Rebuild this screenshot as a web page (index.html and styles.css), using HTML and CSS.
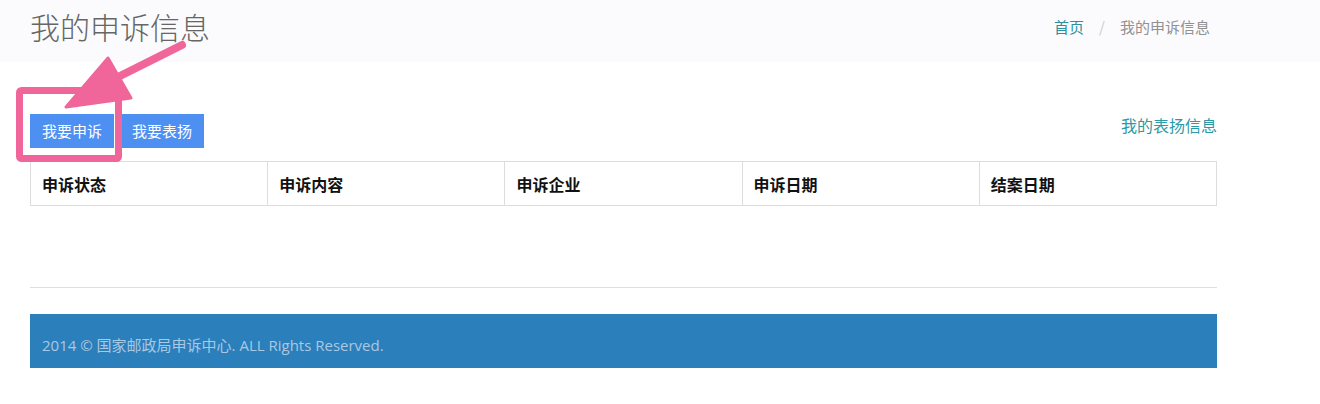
FILE: index.html
```html
<!DOCTYPE html>
<html lang="zh-CN">
<head>
<meta charset="utf-8">
<title>我的申诉信息</title>
<link rel="stylesheet" href="styles.css">
</head>
<body>
<header class="page-head">
  <div class="container head-inner">
    <h1 class="page-title">我的申诉信息</h1>
    <ol class="breadcrumb">
      <li><a href="#" class="crumb-link">首页</a></li>
      <li class="crumb-sep">/</li>
      <li class="crumb-active">我的申诉信息</li>
    </ol>
  </div>
</header>

<main class="container content">
  <div class="toolbar">
    <div class="btn-group">
      <a href="#" class="btn">我要申诉</a>
      <a href="#" class="btn">我要表扬</a>
    </div>
    <a href="#" class="side-link">我的表扬信息</a>
  </div>

  <table class="grid">
    <thead>
      <tr>
        <th>申诉状态</th>
        <th>申诉内容</th>
        <th>申诉企业</th>
        <th>申诉日期</th>
        <th>结案日期</th>
      </tr>
    </thead>
  </table>

  <hr class="divider">

  <footer class="footer">
    2014 © 国家邮政局申诉中心. ALL Rights Reserved.
  </footer>
</main>

<svg class="annotation" width="200" height="170" viewBox="0 0 200 170" aria-hidden="true">
  <rect x="19.5" y="90.5" width="99" height="68" rx="2" fill="none" stroke="#f0669a" stroke-width="7"/>
  <line x1="182" y1="45" x2="104" y2="84" stroke="#f0669a" stroke-width="8" stroke-linecap="round"/>
  <polygon points="108,58 131,98 66,107" fill="#f0669a" stroke="#f0669a" stroke-width="3" stroke-linejoin="round"/>
</svg>
</body>
</html>
```

FILE: styles.css
```css
html, body {
  margin: 0;
  padding: 0;
  background: #ffffff;
}

body {
  font-family: "Open Sans", "Noto Sans CJK SC", sans-serif;
  color: #333;
  position: relative;
  width: 1320px;
  height: 404px;
  overflow: hidden;
}

.container {
  width: 1187px;
  margin-left: 30px;
}

.page-head {
  background: #fbfbfd;
  height: 62px;
}

.head-inner {
  display: flex;
  justify-content: space-between;
  align-items: flex-start;
}

.page-title {
  margin: 0;
  padding-top: 9px;
  font-family: "Noto Sans CJK SC", sans-serif;
  font-weight: 300;
  font-size: 30px;
  line-height: 34px;
  color: #666666;
}

.breadcrumb {
  list-style: none;
  margin: 0;
  padding: 17px 7px 0 0;
  display: flex;
  gap: 15px;
  font-family: "Noto Sans CJK SC", sans-serif;
  font-size: 15px;
  line-height: 20px;
}

.crumb-link {
  color: #2b8f9d;
  text-decoration: none;
}

.crumb-sep {
  color: #cccccc;
}

.crumb-active {
  color: #919191;
}

.content {
  padding-top: 52px;
}

.toolbar {
  display: flex;
  justify-content: space-between;
  align-items: flex-start;
}

.btn-group {
  display: flex;
  gap: 6px;
}

.btn {
  display: block;
  height: 34px;
  line-height: 34px;
  padding: 0 12px;
  background: #4e8ff2;
  color: #ffffff;
  font-family: "Noto Sans CJK SC", sans-serif;
  font-size: 15px;
  text-decoration: none;
}

.side-link {
  margin-top: 1px;
  color: #2c9aa6;
  font-family: "Noto Sans CJK SC", sans-serif;
  font-size: 16px;
  line-height: 20px;
  text-decoration: none;
}

.grid {
  width: 100%;
  margin-top: 13px;
  border-collapse: collapse;
  table-layout: fixed;
}

.grid th {
  border: 1px solid #dddddd;
  height: 43px;
  padding: 0 11px;
  line-height: 20px;
  text-align: left;
  font-family: "Noto Sans CJK SC", sans-serif;
  font-weight: 700;
  font-size: 16px;
  color: #111111;
}

.divider {
  margin: 81px 0 0;
  border: 0;
  border-top: 1px solid #dedede;
}

.footer {
  margin-top: 26px;
  height: 54px;
  line-height: 54px;
  padding: 4px 12px 0;
  box-sizing: border-box;
  background: #2b7fba;
  color: #a9c8e4;
  font-family: "Open Sans", "Noto Sans CJK SC", sans-serif;
  font-size: 15px;
}

.annotation {
  position: absolute;
  left: 0;
  top: 0;
  pointer-events: none;
}
```
